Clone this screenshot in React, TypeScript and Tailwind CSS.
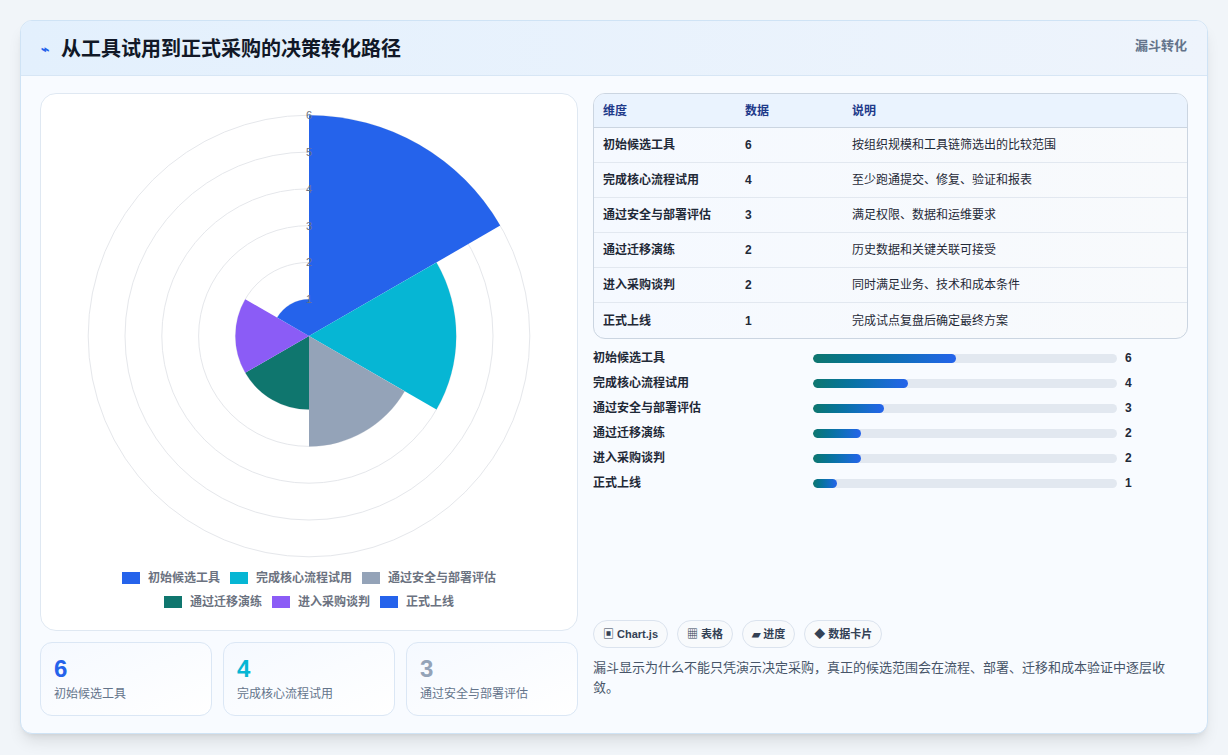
const rows = [
  { name: "初始候选工具", v: 6, desc: "按组织规模和工具链筛选出的比较范围", color: "#2563eb" },
  { name: "完成核心流程试用", v: 4, desc: "至少跑通提交、修复、验证和报表", color: "#06b6d4" },
  { name: "通过安全与部署评估", v: 3, desc: "满足权限、数据和运维要求", color: "#94a3b8" },
  { name: "通过迁移演练", v: 2, desc: "历史数据和关键关联可接受", color: "#0f766e" },
  { name: "进入采购谈判", v: 2, desc: "同时满足业务、技术和成本条件", color: "#8b5cf6" },
  { name: "正式上线", v: 1, desc: "完成试点复盘后确定最终方案", color: "#2563eb" },
];

const CX = 268;
const CY = 240;
const U = 36.8;

function sector(i: number, r: number) {
  const a0 = ((-90 + i * 60) * Math.PI) / 180;
  const a1 = ((-30 + i * 60) * Math.PI) / 180;
  const x0 = CX + r * Math.cos(a0), y0 = CY + r * Math.sin(a0);
  const x1 = CX + r * Math.cos(a1), y1 = CY + r * Math.sin(a1);
  return `M${CX} ${CY} L${x0} ${y0} A${r} ${r} 0 0 1 ${x1} ${y1} Z`;
}

function PolarChart() {
  return (
    <svg width="538" height="470" viewBox="0 0 538 470" className="block">
      {[1, 2, 3, 4, 5, 6].map((k) => (
        <circle key={k} cx={CX} cy={CY} r={k * U} fill="none" stroke="#e5e7eb" strokeWidth="1" />
      ))}
      {rows.map((r, i) => (
        <path key={i} d={sector(i, r.v * U)} fill={r.color} />
      ))}
      {[1, 2, 3, 4, 5, 6].map((k) => (
        <text key={k} x={CX} y={CY - k * U + 4} textAnchor="middle" fontSize="11" fill="#6b7280" fontFamily="Liberation Sans, sans-serif">
          {k}
        </text>
      ))}
    </svg>
  );
}

const font = { fontFamily: "'Liberation Sans', 'Noto Sans CJK SC', sans-serif" };

export default function App() {
  return (
    <div className="w-[1228px] h-[755px] bg-[#f1f5f9] p-5 pb-0" style={font}>
      <div className="h-[714px] rounded-xl border border-[#cfe3f5] bg-[#f8fbff] shadow-lg overflow-hidden flex flex-col">
        <div className="h-[55px] flex items-start justify-between px-5 pt-[13px] bg-gradient-to-r from-[#e3f0fd] to-[#eef4fc] border-b border-[#d7e6f5]">
          <div className="flex items-center gap-3">
            <span className="text-[#2563eb] text-sm font-bold">⌁</span>
            <h1 className="text-[20px] font-bold text-[#111827]">从工具试用到正式采购的决策转化路径</h1>
          </div>
          <span className="text-[13px] font-bold text-[#64748b] pt-[2px]">漏斗转化</span>
        </div>
        <div className="flex gap-[15px] px-[19px] pt-[17px]">
          <div className="w-[538px] flex flex-col gap-[11px]">
            <div className="h-[538px] bg-white rounded-2xl border border-[#dfe8f2] flex flex-col">
              <div className="pt-[2px]"><PolarChart /></div>
              <div className="flex flex-wrap justify-center gap-x-[10px] gap-y-[6px] px-8 mt-[3px]">
                {rows.map((r, i) => (
                  <div key={i} className="flex items-center gap-2 text-[12px] text-[#6b7280] font-bold">
                    <span className="w-[18px] h-[12px]" style={{ background: r.color }} />
                    {r.name}
                  </div>
                ))}
              </div>
            </div>
            <div className="grid grid-cols-3 gap-[11px]">
              {rows.slice(0, 3).map((r, i) => (
                <div key={i} className="h-[74px] rounded-xl border border-[#dbe7f5] bg-gradient-to-br from-[#f5f9ff] to-white px-[13px] pt-[10px]">
                  <div className="text-[24px] font-bold leading-8" style={{ color: r.color }}>{r.v}</div>
                  <div className="text-[12px] text-[#64748b]">{r.name}</div>
                </div>
              ))}
            </div>
          </div>
          <div className="flex-1 flex flex-col">
            <div className="rounded-xl border border-[#cbd5e1] overflow-hidden bg-gradient-to-r from-[#f5f9ff] to-[#f8fafc]">
              <div className="grid grid-cols-[142px_107px_1fr] h-[34px] items-center px-[9px] text-[12px] font-bold text-[#1e3a8a] bg-[#eaf3fe] border-b border-[#cbd5e1]">
                <span>维度</span><span>数据</span><span>说明</span>
              </div>
              {rows.map((r, i) => (
                <div key={i} className={`grid grid-cols-[142px_107px_1fr] h-[35px] items-center px-[9px] text-[12px] text-[#1f2937] ${i < 5 ? "border-b border-[#e2e8f0]" : ""}`}>
                  <span className="font-bold">{r.name}</span><span className="font-bold">{r.v}</span><span>{r.desc}</span>
                </div>
              ))}
            </div>
            <div className="flex flex-col gap-[7px] mt-[10px]">
              {rows.map((r, i) => (
                <div key={i} className="flex items-center h-[18px] text-[12px] font-bold text-[#1f2937]">
                  <span className="w-[220px]">{r.name}</span>
                  <div className="w-[304px] h-[9px] rounded-full bg-[#e2e8f0] overflow-hidden">
                    <div className="h-full rounded-full bg-gradient-to-r from-[#0f766e] to-[#2563eb]" style={{ width: `${r.v * 23.8}px` }} />
                  </div>
                  <span className="ml-2">{r.v}</span>
                </div>
              ))}
            </div>
            <div className="mt-auto flex gap-[9px] pt-[2px]">
              {["▣ Chart.js", "▦ 表格", "▰ 进度", "◆ 数据卡片"].map((t) => (
                <span key={t} className="h-[28px] px-[9px] flex items-center rounded-full border border-[#dbe3ee] bg-[#f8fafc] text-[11px] font-bold text-[#334155]">{t}</span>
              ))}
            </div>
            <p className="mt-[10px] text-[13px] leading-[20px] text-[#475569] mb-[18px]">
              漏斗显示为什么不能只凭演示决定采购，真正的候选范围会在流程、部署、迁移和成本验证中逐层收敛。
            </p>
          </div>
        </div>
      </div>
    </div>
  );
}
